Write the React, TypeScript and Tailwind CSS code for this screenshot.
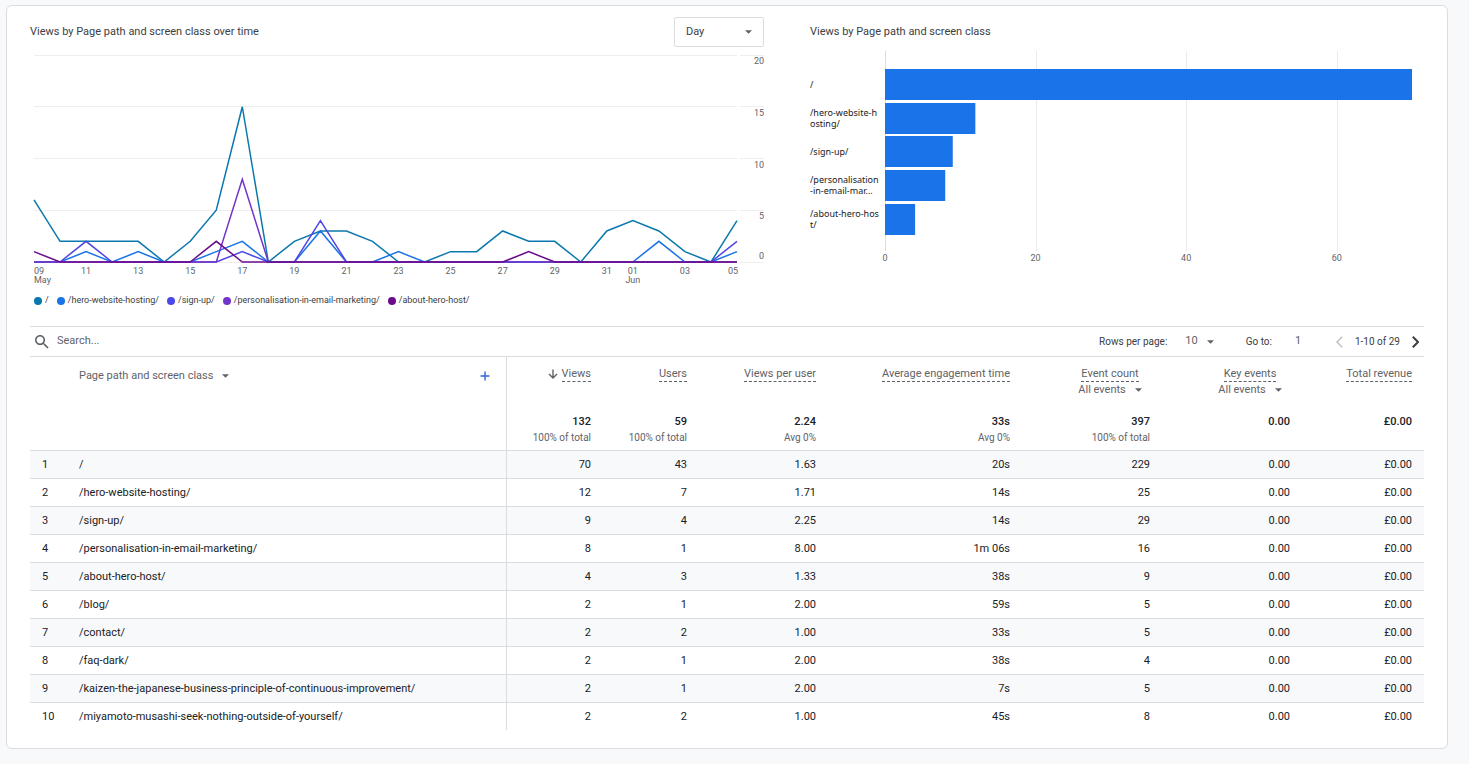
import { useState } from "react";

interface Series {
  name: string;
  color: string;
  dotClass: string;
  values: number[];
}

interface PageRow {
  path: string;
  views: string;
  users: string;
  viewsPerUser: string;
  engagement: string;
  events: string;
}

const SERIES: Series[] = [
  {
    name: "/",
    color: "#0b78ad",
    dotClass: "bg-[#0b78ad]",
    values: [6, 2, 2, 2, 2, 0, 2, 5, 15, 0, 2, 3, 3, 2, 0, 0, 1, 1, 3, 2, 2, 0, 3, 4, 3, 1, 0, 4],
  },
  {
    name: "/hero-website-hosting/",
    color: "#1a73e8",
    dotClass: "bg-[#1a73e8]",
    values: [0, 0, 1, 0, 1, 0, 0, 1, 2, 0, 0, 3, 0, 0, 1, 0, 0, 0, 0, 0, 0, 0, 0, 0, 2, 0, 0, 1],
  },
  {
    name: "/sign-up/",
    color: "#4f46e5",
    dotClass: "bg-[#4b48ea]",
    values: [0, 0, 2, 0, 0, 0, 0, 0, 1, 0, 0, 4, 0, 0, 0, 0, 0, 0, 0, 0, 0, 0, 0, 0, 0, 0, 0, 2],
  },
  {
    name: "/personalisation-in-email-marketing/",
    color: "#7335c9",
    dotClass: "bg-[#7335c9]",
    values: [0, 0, 0, 0, 0, 0, 0, 0, 8, 0, 0, 0, 0, 0, 0, 0, 0, 0, 0, 0, 0, 0, 0, 0, 0, 0, 0, 0],
  },
  {
    name: "/about-hero-host/",
    color: "#6a0a8c",
    dotClass: "bg-[#6a0a8c]",
    values: [1, 0, 0, 0, 0, 0, 0, 2, 0, 0, 0, 0, 0, 0, 0, 0, 0, 0, 0, 1, 0, 0, 0, 0, 0, 0, 0, 0],
  },
];

const DAYS = [
  { index: 2, label: "11" },
  { index: 4, label: "13" },
  { index: 6, label: "15" },
  { index: 8, label: "17" },
  { index: 10, label: "19" },
  { index: 12, label: "21" },
  { index: 14, label: "23" },
  { index: 16, label: "25" },
  { index: 18, label: "27" },
  { index: 20, label: "29" },
  { index: 22, label: "31" },
  { index: 23, label: "01", month: "Jun" },
  { index: 25, label: "03" },
];

const BARS = [
  { lines: ["/"], value: 70 },
  { lines: ["/hero-website-h", "osting/"], value: 12 },
  { lines: ["/sign-up/"], value: 9 },
  { lines: ["/personalisation", "-in-email-mar..."], value: 8 },
  { lines: ["/about-hero-hos", "t/"], value: 4 },
];

const ROWS: PageRow[] = [
  { path: "/", views: "70", users: "43", viewsPerUser: "1.63", engagement: "20s", events: "229" },
  { path: "/hero-website-hosting/", views: "12", users: "7", viewsPerUser: "1.71", engagement: "14s", events: "25" },
  { path: "/sign-up/", views: "9", users: "4", viewsPerUser: "2.25", engagement: "14s", events: "29" },
  { path: "/personalisation-in-email-marketing/", views: "8", users: "1", viewsPerUser: "8.00", engagement: "1m 06s", events: "16" },
  { path: "/about-hero-host/", views: "4", users: "3", viewsPerUser: "1.33", engagement: "38s", events: "9" },
  { path: "/blog/", views: "2", users: "1", viewsPerUser: "2.00", engagement: "59s", events: "5" },
  { path: "/contact/", views: "2", users: "2", viewsPerUser: "1.00", engagement: "33s", events: "5" },
  { path: "/faq-dark/", views: "2", users: "1", viewsPerUser: "2.00", engagement: "38s", events: "4" },
  { path: "/kaizen-the-japanese-business-principle-of-continuous-improvement/", views: "2", users: "1", viewsPerUser: "2.00", engagement: "7s", events: "5" },
  { path: "/miyamoto-musashi-seek-nothing-outside-of-yourself/", views: "2", users: "2", viewsPerUser: "1.00", engagement: "45s", events: "8" },
];

const TOTALS = [
  { value: "132", note: "100% of total" },
  { value: "59", note: "100% of total" },
  { value: "2.24", note: "Avg 0%" },
  { value: "33s", note: "Avg 0%" },
  { value: "397", note: "100% of total" },
  { value: "0.00" },
  { value: "£0.00" },
];

const dayX = (index: number) => 4 + (index * 703) / 27;
const viewY = (value: number) => 215 - (value * 207) / 20;
const barX = (value: number) => 75 + (value * 527) / 70;

function Caret({ className }: { className: string }) {
  return (
    <svg aria-hidden="true" viewBox="0 0 8 4" className={`pointer-events-none h-1 w-[7px] fill-[#5f6368] ${className}`}>
      <path d="M0 0h8L4 4z" />
    </svg>
  );
}

interface DropdownProps {
  label: string;
  options: string[];
  className: string;
}

function Dropdown({ label, options, className }: DropdownProps) {
  return (
    <span className="relative inline-flex items-center">
      <select
        aria-label={label}
        className={`cursor-pointer appearance-none bg-transparent outline-none field-sizing-content ${className}`}
      >
        {options.map((option) => (
          <option key={option}>{option}</option>
        ))}
      </select>
      <Caret className="absolute right-0" />
    </span>
  );
}

function LineChart() {
  return (
    <svg viewBox="0 0 734 242" role="img" aria-label="Views over time" className="block w-full">
      {[0, 5, 10, 15, 20].map((tick) => (
        <g key={tick}>
          <path
            d={`M4 ${Math.floor(viewY(tick)) + 0.5}H707M710 ${Math.floor(viewY(tick)) + 0.5}H734`}
            stroke="#eeeeee"
          />
          <text
            x="734"
            y={tick === 0 ? 212 : Math.round(viewY(tick)) + 9}
            textAnchor="end"
            className="fill-[#5f6368] text-[9px]"
          >
            {tick}
          </text>
        </g>
      ))}
      {SERIES.map((series) => (
        <polyline
          key={series.name}
          points={series.values.map((v, i) => `${dayX(i)},${viewY(v)}`).join(" ")}
          fill="none"
          stroke={series.color}
          strokeWidth="1.5"
        />
      ))}
      <g className="fill-[#5f6368] text-[9px]">
        <text x="4" y="227">09</text>
        <text x="4" y="236">May</text>
        {DAYS.map((day) => (
          <g key={day.label} textAnchor="middle">
            <text x={dayX(day.index)} y="227">{day.label}</text>
            {day.month && <text x={dayX(day.index)} y="236">{day.month}</text>}
          </g>
        ))}
        <text x="708" y="227" textAnchor="end">05</text>
      </g>
    </svg>
  );
}

function BarChart() {
  return (
    <svg viewBox="0 0 614 220" role="img" aria-label="Views by page" className="block w-full">
      {[0, 20, 40, 60].map((tick) => (
        <g key={tick}>
          <path d={`M${Math.round(barX(tick)) + 0.5} 4V204`} stroke={tick === 0 ? "#dadce0" : "#ebebeb"} />
          <text x={barX(tick)} y="214" textAnchor="middle" className="fill-[#5f6368] text-[9px]">
            {tick}
          </text>
        </g>
      ))}
      {BARS.map((bar, i) => {
        const top = 22 + Math.round(i * 33.7);
        const first = bar.lines.length > 1 ? top + 13 : top + 19;
        return (
          <g key={bar.lines[0]}>
            <rect x="75" y={top} width={barX(bar.value) - 75} height="31" fill="#1a73e8" />
            <text className="fill-[#202124] font-[Noto_Sans,sans-serif] text-[9px]">
              {bar.lines.map((line, n) => (
                <tspan key={line} x="0" y={first + n * 11}>{line}</tspan>
              ))}
            </text>
          </g>
        );
      })}
    </svg>
  );
}

function MetricHeader({ title, sorted, filter }: { title: string; sorted?: boolean; filter?: boolean }) {
  return (
    <th scope="col" className="h-14 pt-[9px] pr-3 text-right align-top font-normal">
      <div className={`flex flex-col ${filter ? "items-center pl-12" : "items-end"}`}>
        <span className="flex items-center gap-1">
          {sorted && (
            <svg aria-hidden="true" viewBox="0 0 10 10" className="h-2.5 w-2.5 fill-none stroke-[#5f6368] stroke-[1.4]">
              <path d="M5 .5v8.5M1 5l4 4 4-4" />
            </svg>
          )}
          <button type="button" className="border-b border-dashed border-[#5f6368] leading-[15px] whitespace-nowrap">
            {title}
          </button>
        </span>
        {filter && <Dropdown label={`${title} filter`} options={["All events"]} className="pr-4 leading-4" />}
      </div>
    </th>
  );
}

export default function App() {
  const [query, setQuery] = useState("");
  const [page, setPage] = useState("1");

  const rows = ROWS.filter((row) => row.path.includes(query.trim()));

  return (
    <div className="min-h-screen bg-[#f8f9fb] pt-[5px] pr-[21px] pb-[15px] pl-1.5 font-[Roboto,sans-serif] text-[11px] text-[#5f6368]">
      <main className="rounded-md border border-[#dadce0] bg-white px-[23px] pt-[11px] pb-[18px]">
        <div className="grid grid-cols-[734fr_614fr] gap-[46px]">
          <section>
            <div className="flex h-[30px] items-center justify-between">
              <h2 className="text-[#3c4043]">Views by Page path and screen class over time</h2>
              <span className="relative flex items-center">
                <select
                  aria-label="Granularity"
                  className="h-[30px] w-[90px] cursor-pointer appearance-none rounded-xs border border-[#dadce0] bg-white pl-[11px] text-[#3c4043]"
                >
                  <option>Day</option>
                  <option>Week</option>
                  <option>Month</option>
                </select>
                <Caret className="absolute right-3" />
              </span>
            </div>
            <LineChart />
            <ul className="flex h-6 items-center gap-2 pl-1 text-[9px] text-[#3c4043]">
              {SERIES.map((series) => (
                <li key={series.name} className="flex items-center gap-[3px]">
                  <span className={`h-2 w-2 rounded-full ${series.dotClass}`} />
                  {series.name}
                </li>
              ))}
            </ul>
          </section>

          <section>
            <h2 className="flex h-[30px] items-center text-[#3c4043]">Views by Page path and screen class</h2>
            <BarChart />
          </section>
        </div>

        {/* Search and pagination */}
        <div className="mt-[13px] flex h-[31px] items-center border-y border-[#dadce0]">
          <label className="flex flex-1 items-center gap-2 pl-[5px]">
            <svg aria-hidden="true" viewBox="3 3 18 18" className="h-3.5 w-3.5 fill-[#5f6368]">
              <path d="M15.5 14h-.79l-.28-.27C15.41 12.59 16 11.11 16 9.5 16 5.91 13.09 3 9.5 3S3 5.91 3 9.5 5.91 16 9.5 16c1.61 0 3.09-.59 4.23-1.57l.27.28v.79l5 4.99L20.49 19l-4.99-5zm-6 0C7.01 14 5 11.99 5 9.5S7.01 5 9.5 5 14 7.01 14 9.5 11.99 14 9.5 14z" />
            </svg>
            <input
              type="text"
              aria-label="Search"
              value={query}
              onChange={(e) => setQuery(e.target.value)}
              placeholder="Search..."
              className="w-60 bg-transparent outline-none placeholder:text-[#5f6368]"
            />
          </label>
          <div className="flex items-center text-[10px]">
            <span className="pr-[18px] text-[#3c4043]">Rows per page:</span>
            <span className="text-[11px]">
              <Dropdown label="Rows per page" options={["10", "25", "50"]} className="pr-4" />
            </span>
            <label className="flex items-center pl-8 text-[#3c4043]">
              Go to:
              <input
                type="text"
                value={page}
                onChange={(e) => setPage(e.target.value)}
                className="w-[52px] bg-transparent text-center text-[11px] text-[#5f6368] outline-none"
              />
            </label>
            <button type="button" aria-label="Previous page" disabled className="px-3">
              <svg aria-hidden="true" viewBox="0 0 7 12" className="h-3 w-[7px] fill-none stroke-[#bdc1c6] stroke-[1.5]">
                <path d="M6.2.8 1 6l5.2 5.2" />
              </svg>
            </button>
            <span className="text-[#3c4043]">1-10 of 29</span>
            <button type="button" aria-label="Next page" className="pr-[5px] pl-3">
              <svg aria-hidden="true" viewBox="0 0 7 12" className="h-3 w-[7px] fill-none stroke-[#3c4043] stroke-2">
                <path d="M.8.8 6 6 .8 11.2" />
              </svg>
            </button>
          </div>
        </div>

        <table className="w-full table-fixed border-separate border-spacing-0">
          <colgroup>
            <col className="w-[49px]" />
            <col className="w-[428px]" />
            <col className="w-[96px]" />
            <col className="w-[96px]" />
            <col className="w-[129px]" />
            <col className="w-[194px]" />
            <col className="w-[140px]" />
            <col className="w-[140px]" />
            <col className="w-[122px]" />
          </colgroup>
          <thead>
            <tr>
              <th
                scope="col"
                colSpan={2}
                className="border-r border-[#dadce0] pt-[11px] pr-4 pl-[49px] text-left align-top font-normal"
              >
                <div className="flex items-center justify-between">
                  <Dropdown label="Dimension" options={["Page path and screen class"]} className="pr-4 leading-4" />
                  <button type="button" aria-label="Add dimension">
                    <svg aria-hidden="true" viewBox="0 0 10 10" className="h-2.5 w-2.5 stroke-[#3367d6] stroke-[1.4]">
                      <path d="M5 .5v9M.5 5h9" />
                    </svg>
                  </button>
                </div>
              </th>
              <MetricHeader title="Views" sorted />
              <MetricHeader title="Users" />
              <MetricHeader title="Views per user" />
              <MetricHeader title="Average engagement time" />
              <MetricHeader title="Event count" filter />
              <MetricHeader title="Key events" filter />
              <MetricHeader title="Total revenue" />
            </tr>
          </thead>
          <tbody>
            <tr>
              <td colSpan={2} className="h-[37px] border-r border-[#dadce0]" />
              {TOTALS.map((total, i) => (
                <td key={i} className="pt-px pr-3 text-right align-top">
                  <div className="leading-4 font-medium text-[#202124]">{total.value}</div>
                  {total.note && <div className="text-[10px] leading-4">{total.note}</div>}
                </td>
              ))}
            </tr>
            {rows.map((row, i) => (
              <tr
                key={row.path}
                className="h-7 text-[#202124] odd:bg-white even:bg-[#f8f9fb] *:border-t *:border-[#dadce0] *:pt-0.5 *:pr-3 *:text-right"
              >
                <td className="pr-0! pl-3 text-left!">{i + 1}</td>
                <td className="border-r text-left!">{row.path}</td>
                <td>{row.views}</td>
                <td>{row.users}</td>
                <td>{row.viewsPerUser}</td>
                <td>{row.engagement}</td>
                <td>{row.events}</td>
                <td>0.00</td>
                <td>£0.00</td>
              </tr>
            ))}
          </tbody>
        </table>
      </main>
    </div>
  );
}
